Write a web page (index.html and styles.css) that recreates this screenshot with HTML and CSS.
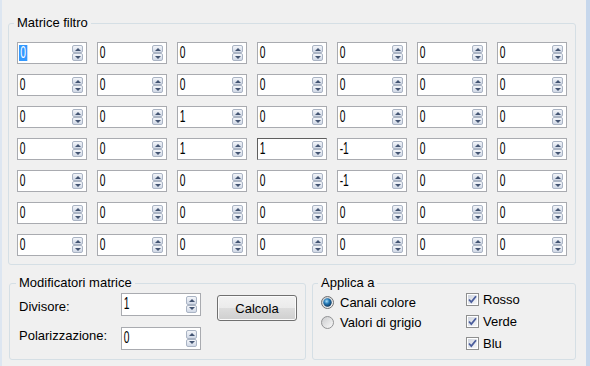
FILE: index.html
```html
<!DOCTYPE html>
<html lang="it">
<head>
    <meta charset="UTF-8">
    <title>Matrice filtro</title>
    <link rel="stylesheet" href="styles.css">
</head>
<body>
<svg class="defs" width="0" height="0">
    <defs>
        <linearGradient id="ring" x1="0" y1="0" x2="1" y2="1">
            <stop offset="0" stop-color="#c9cacc"/>
            <stop offset="1" stop-color="#fbfbfb"/>
        </linearGradient>
        <radialGradient id="dot" cx="0.4" cy="0.35" r="0.7">
            <stop offset="0" stop-color="#a9e0fa"/>
            <stop offset="0.45" stop-color="#2479b6"/>
            <stop offset="1" stop-color="#0b2f52"/>
        </radialGradient>
        <linearGradient id="box" x1="0" y1="0" x2="1" y2="1">
            <stop offset="0" stop-color="#d0d5de"/>
            <stop offset="1" stop-color="#f6f7f9"/>
        </linearGradient>
    </defs>
</svg>

<div class="window">
    <fieldset class="group matrix">
        <legend>Matrice filtro</legend>
        <div class="grid">
            <!--riga 1-->
            <div class="spinner"><span class="val sel">0</span><span class="spin"><i class="up"></i><i class="down"></i></span></div>
            <div class="spinner"><span class="val">0</span><span class="spin"><i class="up"></i><i class="down"></i></span></div>
            <div class="spinner"><span class="val">0</span><span class="spin"><i class="up"></i><i class="down"></i></span></div>
            <div class="spinner"><span class="val">0</span><span class="spin"><i class="up"></i><i class="down"></i></span></div>
            <div class="spinner"><span class="val">0</span><span class="spin"><i class="up"></i><i class="down"></i></span></div>
            <div class="spinner"><span class="val">0</span><span class="spin"><i class="up"></i><i class="down"></i></span></div>
            <div class="spinner"><span class="val">0</span><span class="spin"><i class="up"></i><i class="down"></i></span></div>
            <!--riga 2-->
            <div class="spinner"><span class="val">0</span><span class="spin"><i class="up"></i><i class="down"></i></span></div>
            <div class="spinner"><span class="val">0</span><span class="spin"><i class="up"></i><i class="down"></i></span></div>
            <div class="spinner"><span class="val">0</span><span class="spin"><i class="up"></i><i class="down"></i></span></div>
            <div class="spinner"><span class="val">0</span><span class="spin"><i class="up"></i><i class="down"></i></span></div>
            <div class="spinner"><span class="val">0</span><span class="spin"><i class="up"></i><i class="down"></i></span></div>
            <div class="spinner"><span class="val">0</span><span class="spin"><i class="up"></i><i class="down"></i></span></div>
            <div class="spinner"><span class="val">0</span><span class="spin"><i class="up"></i><i class="down"></i></span></div>
            <!--riga 3-->
            <div class="spinner"><span class="val">0</span><span class="spin"><i class="up"></i><i class="down"></i></span></div>
            <div class="spinner"><span class="val">0</span><span class="spin"><i class="up"></i><i class="down"></i></span></div>
            <div class="spinner"><span class="val">1</span><span class="spin"><i class="up"></i><i class="down"></i></span></div>
            <div class="spinner"><span class="val">0</span><span class="spin"><i class="up"></i><i class="down"></i></span></div>
            <div class="spinner"><span class="val">0</span><span class="spin"><i class="up"></i><i class="down"></i></span></div>
            <div class="spinner"><span class="val">0</span><span class="spin"><i class="up"></i><i class="down"></i></span></div>
            <div class="spinner"><span class="val">0</span><span class="spin"><i class="up"></i><i class="down"></i></span></div>
            <!--riga 4-->
            <div class="spinner"><span class="val">0</span><span class="spin"><i class="up"></i><i class="down"></i></span></div>
            <div class="spinner"><span class="val">0</span><span class="spin"><i class="up"></i><i class="down"></i></span></div>
            <div class="spinner"><span class="val">1</span><span class="spin"><i class="up"></i><i class="down"></i></span></div>
            <div class="spinner focus"><span class="val">1</span><span class="spin"><i class="up"></i><i class="down"></i></span></div>
            <div class="spinner"><span class="val">-1</span><span class="spin"><i class="up"></i><i class="down"></i></span></div>
            <div class="spinner"><span class="val">0</span><span class="spin"><i class="up"></i><i class="down"></i></span></div>
            <div class="spinner"><span class="val">0</span><span class="spin"><i class="up"></i><i class="down"></i></span></div>
            <!--riga 5-->
            <div class="spinner"><span class="val">0</span><span class="spin"><i class="up"></i><i class="down"></i></span></div>
            <div class="spinner"><span class="val">0</span><span class="spin"><i class="up"></i><i class="down"></i></span></div>
            <div class="spinner"><span class="val">0</span><span class="spin"><i class="up"></i><i class="down"></i></span></div>
            <div class="spinner"><span class="val">0</span><span class="spin"><i class="up"></i><i class="down"></i></span></div>
            <div class="spinner"><span class="val">-1</span><span class="spin"><i class="up"></i><i class="down"></i></span></div>
            <div class="spinner"><span class="val">0</span><span class="spin"><i class="up"></i><i class="down"></i></span></div>
            <div class="spinner"><span class="val">0</span><span class="spin"><i class="up"></i><i class="down"></i></span></div>
            <!--riga 6-->
            <div class="spinner"><span class="val">0</span><span class="spin"><i class="up"></i><i class="down"></i></span></div>
            <div class="spinner"><span class="val">0</span><span class="spin"><i class="up"></i><i class="down"></i></span></div>
            <div class="spinner"><span class="val">0</span><span class="spin"><i class="up"></i><i class="down"></i></span></div>
            <div class="spinner"><span class="val">0</span><span class="spin"><i class="up"></i><i class="down"></i></span></div>
            <div class="spinner"><span class="val">0</span><span class="spin"><i class="up"></i><i class="down"></i></span></div>
            <div class="spinner"><span class="val">0</span><span class="spin"><i class="up"></i><i class="down"></i></span></div>
            <div class="spinner"><span class="val">0</span><span class="spin"><i class="up"></i><i class="down"></i></span></div>
            <!--riga 7-->
            <div class="spinner"><span class="val">0</span><span class="spin"><i class="up"></i><i class="down"></i></span></div>
            <div class="spinner"><span class="val">0</span><span class="spin"><i class="up"></i><i class="down"></i></span></div>
            <div class="spinner"><span class="val">0</span><span class="spin"><i class="up"></i><i class="down"></i></span></div>
            <div class="spinner"><span class="val">0</span><span class="spin"><i class="up"></i><i class="down"></i></span></div>
            <div class="spinner"><span class="val">0</span><span class="spin"><i class="up"></i><i class="down"></i></span></div>
            <div class="spinner"><span class="val">0</span><span class="spin"><i class="up"></i><i class="down"></i></span></div>
            <div class="spinner"><span class="val">0</span><span class="spin"><i class="up"></i><i class="down"></i></span></div>
        </div>
    </fieldset>

    <div class="bottom">
        <fieldset class="group modifiers">
            <legend>Modificatori matrice</legend>
            <div class="mod-grid">
                <span class="lbl lbl-div">Divisore:</span>
                <div class="spinner tall"><span class="val">1</span><span class="spin"><i class="up"></i><i class="down"></i></span></div>
                <button class="btn">Calcola</button>
                <span class="lbl lbl-pol">Polarizzazione:</span>
                <div class="spinner tall"><span class="val">0</span><span class="spin"><i class="up"></i><i class="down"></i></span></div>
            </div>
        </fieldset>

        <fieldset class="group apply">
            <legend>Applica a</legend>
            <div class="apply-cols">
                <div class="radios">
                    <div class="opt">
                        <svg width="13" height="13" viewBox="0 0 13 13"><circle cx="6.5" cy="6.5" r="6" fill="url(#ring)" stroke="#6f7072"/><circle cx="6.5" cy="6.5" r="4.2" fill="url(#dot)"/></svg>
                        <span>Canali colore</span>
                    </div>
                    <div class="opt">
                        <svg width="13" height="13" viewBox="0 0 13 13"><circle cx="6.5" cy="6.5" r="6" fill="url(#ring)" stroke="#929395"/></svg>
                        <span>Valori di grigio</span>
                    </div>
                </div>
                <div class="checks">
                    <div class="opt chk">
                        <svg width="13" height="13" viewBox="0 0 13 13"><rect x="0.5" y="0.5" width="12" height="12" fill="#fff" stroke="#8e8f8f"/><rect x="2" y="2" width="9" height="9" fill="url(#box)"/><path d="M3 6.5 L5.3 9 L10 3.2" stroke="#4a5d9c" stroke-width="1.8" fill="none"/></svg>
                        <span>Rosso</span>
                    </div>
                    <div class="opt chk">
                        <svg width="13" height="13" viewBox="0 0 13 13"><rect x="0.5" y="0.5" width="12" height="12" fill="#fff" stroke="#8e8f8f"/><rect x="2" y="2" width="9" height="9" fill="url(#box)"/><path d="M3 6.5 L5.3 9 L10 3.2" stroke="#4a5d9c" stroke-width="1.8" fill="none"/></svg>
                        <span>Verde</span>
                    </div>
                    <div class="opt chk">
                        <svg width="13" height="13" viewBox="0 0 13 13"><rect x="0.5" y="0.5" width="12" height="12" fill="#fff" stroke="#8e8f8f"/><rect x="2" y="2" width="9" height="9" fill="url(#box)"/><path d="M3 6.5 L5.3 9 L10 3.2" stroke="#4a5d9c" stroke-width="1.8" fill="none"/></svg>
                        <span>Blu</span>
                    </div>
                </div>
            </div>
        </fieldset>
    </div>
</div>
</body>
</html>
```

FILE: styles.css
```css
* {
    box-sizing: border-box;
}

body {
    margin: 0;
    background: #f0f0f0;
    font-family: "Liberation Sans", Arial, sans-serif;
    font-size: 13px;
    color: #000;
}

.defs {
    position: absolute;
}

.window {
    height: 366px;
    border-left: 2px solid #dde6f1;
    border-right: 4px solid #c6d7ec;
    padding: 15px 0 0 6px;
}

/* group box */
.group {
    margin: 0;
    min-width: 0;
    border: 1px solid #d5dfe5;
    border-radius: 3px;
}

.group legend {
    padding: 0 3px;
    margin-left: -3px;
    line-height: 16px;
}

.matrix {
    width: 568px;
    padding: 11px 8px 8px;
}

.grid {
    display: grid;
    grid-template-columns: repeat(7, 70px);
    grid-auto-rows: 22px;
    gap: 10px;
}

/* spinner */
.spinner {
    display: flex;
    background: #fff;
    border: 1px solid #a9abb0;
    height: 22px;
}

.spinner.tall {
    width: 80px;
    height: 23px;
}

.spinner.focus {
    border-top-color: #5f5f5f;
    border-left-color: #5f5f5f;
}

/* the dialog font is a narrow one */
.val {
    align-self: flex-start;
    margin: 2px 0 0 1px;
    padding: 0 1px;
    font-size: 16px;
    line-height: 16px;
    transform: scaleX(0.64);
    transform-origin: left center;
}

.val.sel {
    background: #3399ff;
    color: #fff;
    padding: 0 2px;
}

.spin {
    width: 11px;
    margin: 2px 3px 2px auto;
    display: flex;
    flex-direction: column;
}

.spin i {
    flex: 1;
    display: flex;
    align-items: center;
    justify-content: center;
    border: 1px solid #aab4c4;
    border-radius: 2px;
    background: linear-gradient(#f4f6fa, #d0d8e6);
}

.spin i::after {
    content: "";
    display: block;
    width: 0;
    height: 0;
    border-left: 3px solid transparent;
    border-right: 3px solid transparent;
}

.spin .up::after {
    border-bottom: 3px solid #435472;
}

.spin .down::after {
    border-top: 3px solid #435472;
}

/* bottom groups */
.bottom {
    display: flex;
    gap: 6px;
    margin: 10px 0 0 1px;
    width: 567px;
}

.modifiers {
    width: 297px;
    padding: 2px 8px 9px 9px;
}

.mod-grid {
    display: grid;
    grid-template-columns: 102px 96px 80px;
    grid-template-rows: 23px 23px;
    row-gap: 11px;
}

.lbl-div {
    padding-top: 6px;
}

.lbl-pol {
    padding-top: 1px;
}

.btn {
    align-self: start;
    width: 80px;
    height: 26px;
    margin-top: 2px;
    padding: 0;
    border: 1px solid #707070;
    border-radius: 3px;
    background: linear-gradient(#f2f2f2 0, #ebebeb 50%, #dddddd 50%, #cfcfcf 100%);
    box-shadow: inset 0 0 0 1px #fbfbfb;
    font-family: "Liberation Sans", Arial, sans-serif;
    font-size: 13px;
    color: #000;
}

.apply {
    flex: 1;
    padding: 0 8px;
}

.apply-cols {
    display: grid;
    grid-template-columns: 145px auto;
}

.radios {
    display: flex;
    flex-direction: column;
    gap: 4px;
    padding-top: 3px;
}

.checks {
    display: flex;
    flex-direction: column;
    gap: 6px;
}

.opt {
    display: flex;
    align-items: center;
    height: 16px;
    gap: 6px;
}

.opt.chk {
    gap: 4px;
}
```
